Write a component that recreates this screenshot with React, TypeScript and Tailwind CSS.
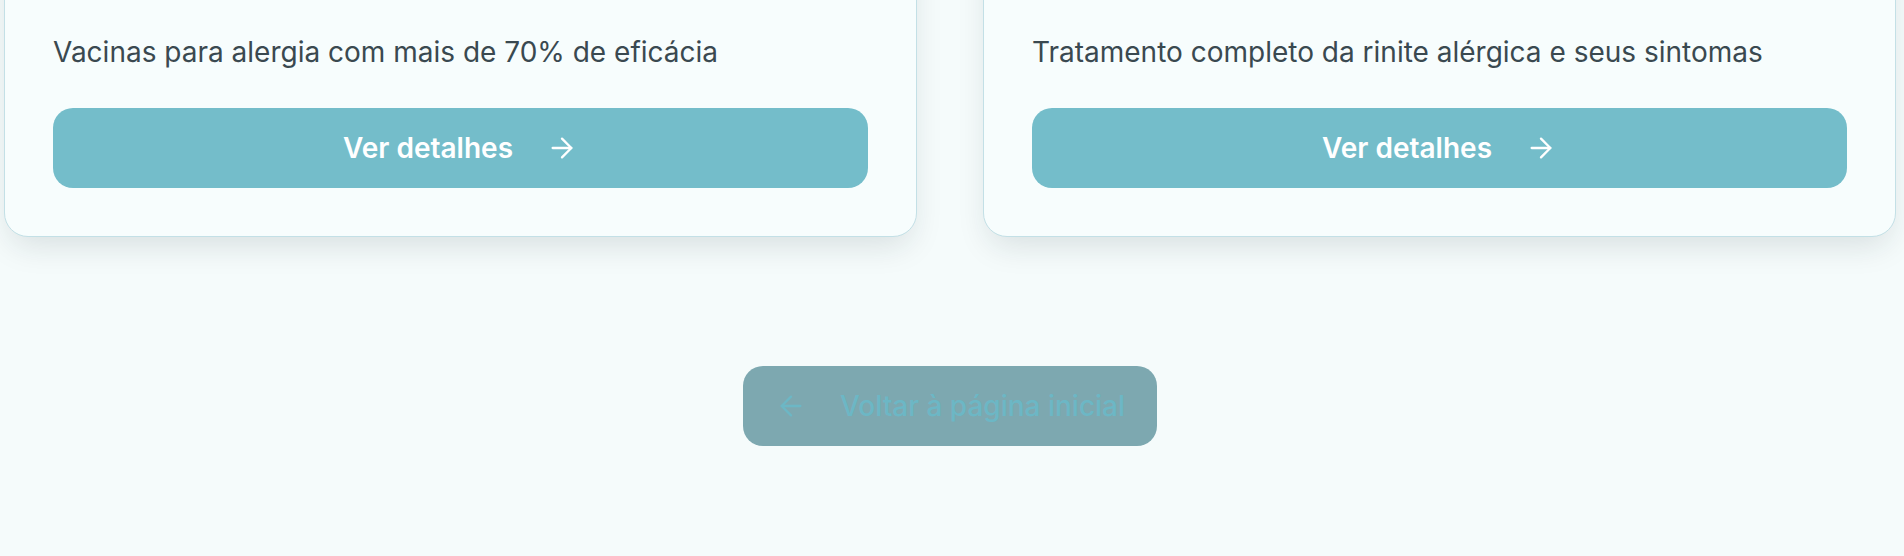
import { ArrowLeft, ArrowRight } from "lucide-react";

const cards = [
  {
    title: "Imunoterapia",
    text: "Vacinas para alergia com mais de 70% de eficácia",
  },
  {
    title: "Rinite Alérgica",
    text: "Tratamento completo da rinite alérgica e seus sintomas",
  },
];

const ServiceCard = ({ title, text }: { title: string; text: string }) => {
  return (
    <article className="flex flex-col rounded-[24px] border-[1.5px] border-[#c3e0e6] bg-[#f7fdfd] px-[48px] pt-[48px] pb-[48px] shadow-[0_14px_32px_-6px_rgba(20,40,45,0.13)]">
      <h3 className="mb-[32px] text-[36px] leading-[41px] font-bold text-[#1f2d33]">{title}</h3>
      <p className="text-[28px] leading-[40px] text-[#3a4950]">{text}</p>
      <button className="mt-[36px] flex h-[80px] w-full items-center justify-center gap-[33px] rounded-[20px] bg-[#74bdca] text-[28px] font-semibold text-white">
        Ver detalhes
        <ArrowRight size={32} strokeWidth={1.75} />
      </button>
    </article>
  );
};

export default function App() {
  return (
    <main
      className="flex min-h-[556px] flex-col overflow-hidden bg-[#f5fbfb] pr-[8px] pl-[4px]"
      style={{ fontFamily: "Inter, 'Noto Sans', sans-serif" }}
    >
      <section className="mt-[-90px] grid grid-cols-2 gap-[66px]">
        {cards.map((card) => (
          <ServiceCard key={card.title} title={card.title} text={card.text} />
        ))}
      </section>

      <div className="mt-[129px] flex justify-center">
        <button className="flex h-[80px] w-[414px] items-center justify-center gap-[33px] rounded-[20px] bg-[#7da8b0] text-[28px] font-medium text-[#6cb7c5]">
          <ArrowLeft size={32} strokeWidth={1.75} />
          Voltar à página inicial
        </button>
      </div>
    </main>
  );
}
